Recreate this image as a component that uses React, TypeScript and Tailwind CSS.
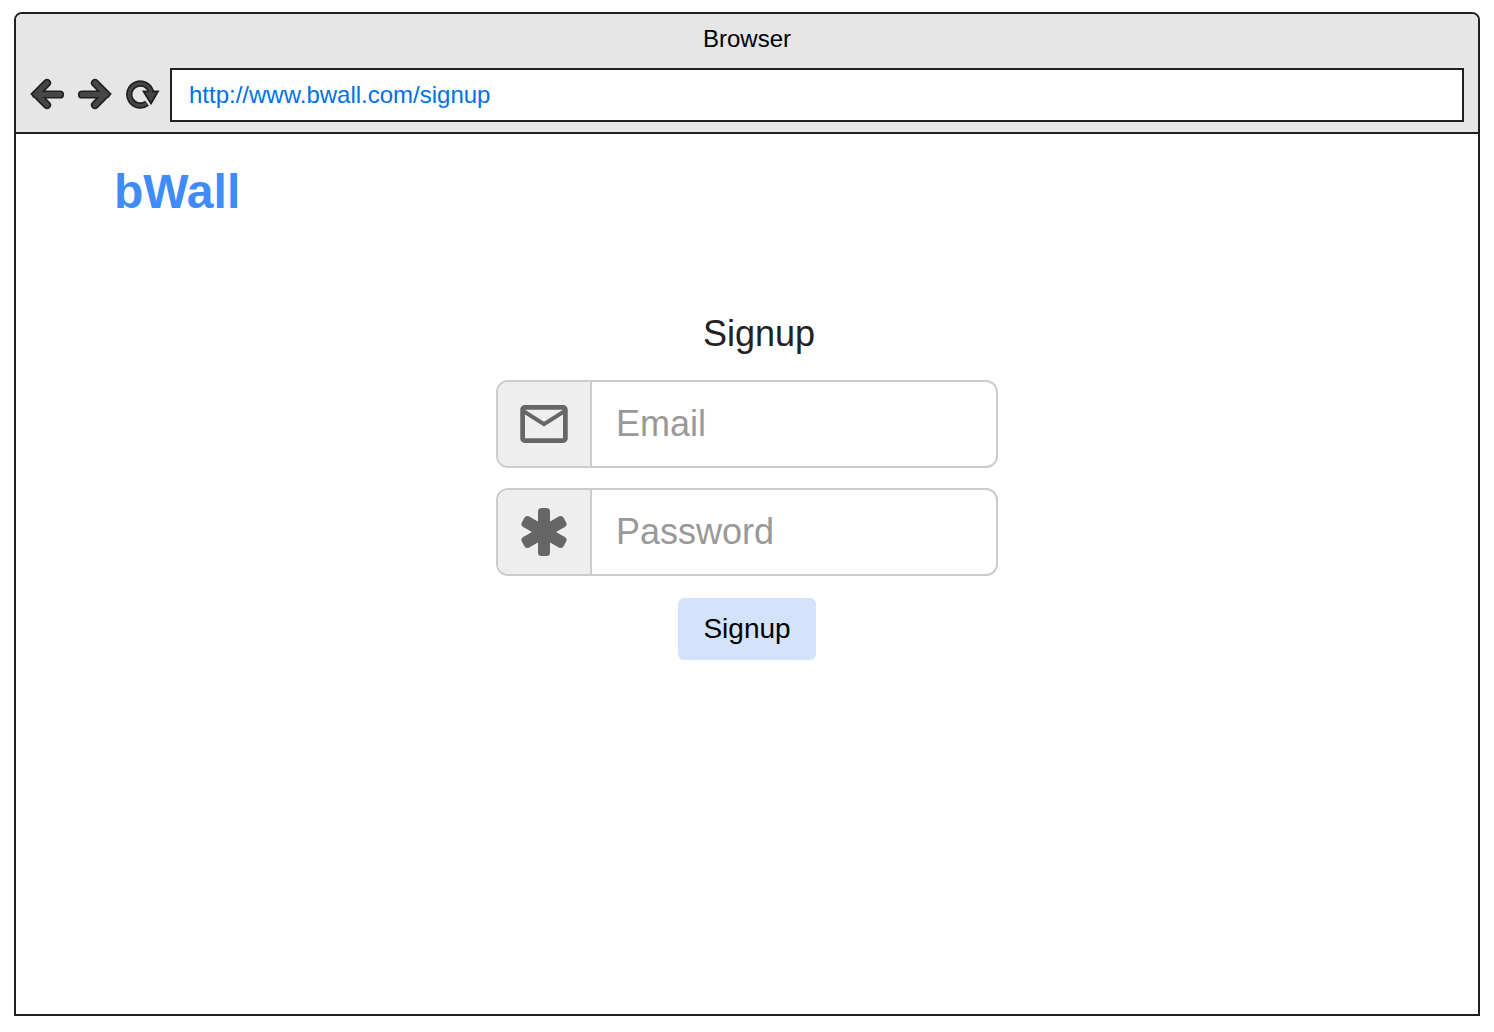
import React from "react";

const INK = "#231f20";
const FILL = "#464646";

function ArrowIcon({ flipped = false }: { flipped?: boolean }) {
  const d = "M17 5 L6 16 L17 27 M6 16.5 H30";
  return (
    <svg
      viewBox="0 0 34 34"
      className={flipped ? "h-[34px] w-[34px] -scale-x-100" : "h-[34px] w-[34px]"}
      fill="none"
      strokeLinecap="round"
      strokeLinejoin="miter"
      aria-hidden="true"
    >
      <path d={d} stroke={INK} strokeWidth="8.2" />
      <path d={d} stroke={FILL} strokeWidth="5" />
    </svg>
  );
}

function ReloadIcon() {
  const ring = "M21 25.2 A11 11 0 1 1 25 14";
  return (
    <svg viewBox="0 0 34 34" className="h-[34px] w-[34px]" fill="none" aria-hidden="true">
      <path d={ring} stroke={INK} strokeWidth="6.4" />
      <path d={ring} stroke={FILL} strokeWidth="3" />
      <path d="M17.5 13.5 H32 L25 25.5 Z" fill={FILL} stroke={INK} strokeWidth="1.8" />
      <path d="M22.5 11.5 L25.5 11.5 L26.5 16 L23.5 16 Z" fill={FILL} />
    </svg>
  );
}

function MailIcon() {
  return (
    <svg viewBox="2 4 20 16" className="h-[38px] w-12" fill="#666666" aria-hidden="true">
      <path d="M22 6c0-1.1-.9-2-2-2H4c-1.1 0-2 .9-2 2v12c0 1.1.9 2 2 2h16c1.1 0 2-.9 2-2V6zm-2 0l-8 5-8-5h16zm0 12H4V8l8 5 8-5v10z" />
    </svg>
  );
}

function AsteriskIcon() {
  return (
    <svg viewBox="0 0 48 48" className="h-12 w-12" fill="#666666" aria-hidden="true">
      <rect x="18" y="0" width="12" height="48" rx="3.5" />
      <rect x="18" y="0" width="12" height="48" rx="3.5" transform="rotate(60 24 24)" />
      <rect x="18" y="0" width="12" height="48" rx="3.5" transform="rotate(-60 24 24)" />
    </svg>
  );
}

type FieldProps = {
  id: string;
  label: string;
  type: string;
  icon: React.ReactNode;
};

function Field({ id, label, type, icon }: FieldProps) {
  return (
    <div className="flex h-[88px] w-full overflow-hidden rounded-xl border-2 border-[#cccccc] bg-white">
      <label
        htmlFor={id}
        aria-label={label}
        className="flex w-[94px] shrink-0 items-center justify-center border-r-2 border-[#cccccc] bg-[#eeeeee]"
      >
        {icon}
      </label>
      <input
        id={id}
        type={type}
        placeholder={label}
        className="min-w-0 flex-1 px-6 text-4xl text-[#222222] outline-none placeholder:text-[#999999]"
      />
    </div>
  );
}

export default function App() {
  return (
    <div className="flex min-h-screen flex-col bg-white px-3.5 pt-3 pb-4 font-['Liberation_Sans',Arial,sans-serif]">
      <div className="flex flex-1 flex-col overflow-hidden rounded-t-lg border-2 border-[#231f20]">
        <header className="border-b-2 border-[#231f20] bg-[#e6e6e6] px-3.5 pb-2.5">
          <div className="flex h-[54px] items-center justify-center pb-1 text-2xl text-black">Browser</div>
          <div className="flex items-center gap-2.5">
            <nav className="flex gap-3.5">
              <button type="button" aria-label="Back">
                <ArrowIcon />
              </button>
              <button type="button" aria-label="Forward">
                <ArrowIcon flipped />
              </button>
              <button type="button" aria-label="Reload">
                <ReloadIcon />
              </button>
            </nav>
            <input
              type="text"
              aria-label="Address"
              defaultValue="http://www.bwall.com/signup"
              className="h-[54px] min-w-0 flex-1 border-2 border-[#231f20] bg-white px-[17px] text-2xl text-[#0071e8] outline-none"
            />
          </div>
        </header>

        <main className="flex-1">
          <div className="px-[98px] pt-[34px]">
            <a href="/" className="text-5xl font-bold text-[#3f8cf8]">
              bWall
            </a>
          </div>
          <form
            className="mx-auto mt-[98px] flex w-full max-w-[502px] flex-col items-center"
            onSubmit={(e) => e.preventDefault()}
          >
            <h1 className="pl-6 text-4xl text-[#222222]">Signup</h1>
            <div className="mt-[26px] flex w-full flex-col gap-5">
              <Field id="email" label="Email" type="email" icon={<MailIcon />} />
              <Field id="password" label="Password" type="password" icon={<AsteriskIcon />} />
            </div>
            <button
              type="submit"
              className="mt-[22px] h-[62px] w-[138px] rounded-md bg-[#d4e3fc] text-[28px] text-black"
            >
              Signup
            </button>
          </form>
        </main>
      </div>
    </div>
  );
}
